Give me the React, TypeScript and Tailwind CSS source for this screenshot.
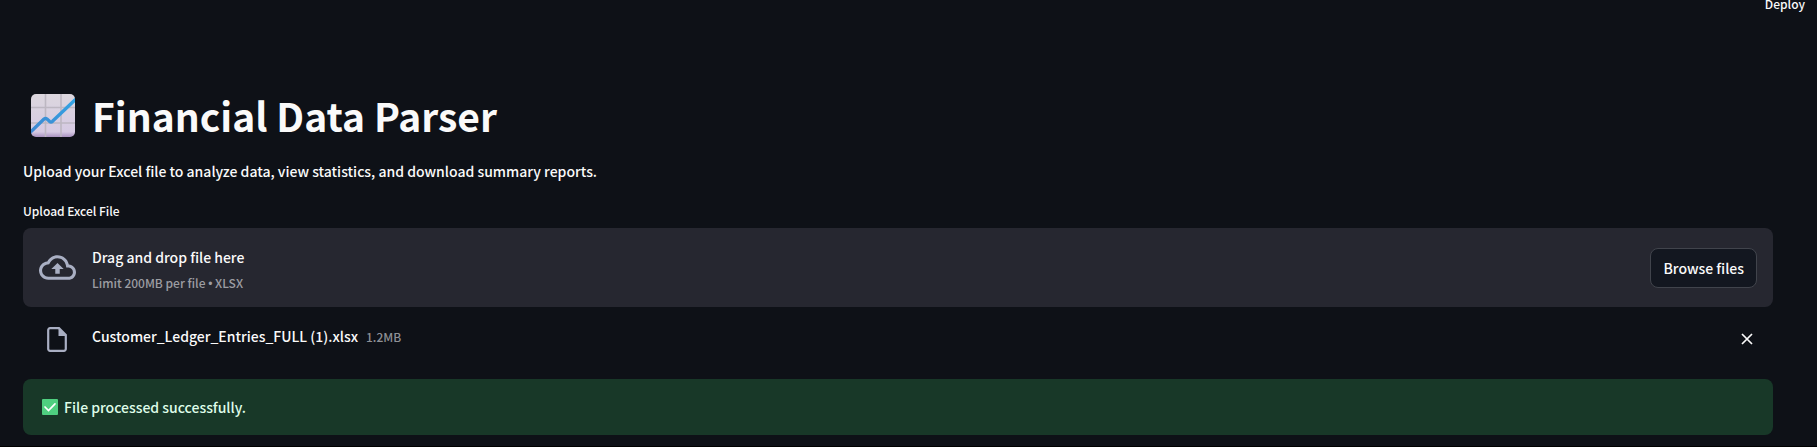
function ChartIcon() {
  return (
    <svg viewBox="0 0 44 43" className="h-[43px] w-11 shrink-0" aria-hidden="true">
      <defs>
        <linearGradient id="paper" x1="0" y1="0" x2="0" y2="1">
          <stop offset="0" stopColor="#dcd7de" />
          <stop offset="0.88" stopColor="#d6cae3" />
          <stop offset="1" stopColor="#a992c0" />
        </linearGradient>
        <linearGradient id="line" x1="0" y1="1" x2="1" y2="0">
          <stop offset="0" stopColor="#3f86d0" />
          <stop offset="1" stopColor="#32a5e4" />
        </linearGradient>
        <clipPath id="sheet">
          <rect width="44" height="43" rx="5" />
        </clipPath>
      </defs>
      <g clipPath="url(#sheet)">
        <rect width="44" height="43" fill="url(#paper)" />
        <path d="M14.500 0v43M30 0v43M0 13.500h44M0 29h44" stroke="#bdb7c2" strokeWidth="1.600" />
        <path d="M-1 38.500 13 25q1.500-1.200 3 0l2.500 2.300q1.500 1.200 3 0L45 5" fill="none" stroke="url(#line)" strokeWidth="3.400" />
      </g>
    </svg>
  );
}

function CheckIcon() {
  return (
    <svg viewBox="0 0 16 16" className="size-4 shrink-0" aria-hidden="true">
      <rect width="16" height="16" rx="1" fill="#4fcf80" />
      <path d="m3 8 3.500 3.500L13 4.800" fill="none" stroke="#fff" strokeWidth="1.700" strokeLinecap="round" />
    </svg>
  );
}

function CloudUploadIcon() {
  return (
    <svg viewBox="0 0 24 24" className="size-[37px] shrink-0" fill="#a9afc3" aria-hidden="true">
      <path d="M19.350 10.040C18.670 6.590 15.640 4 12 4 9.110 4 6.600 5.640 5.350 8.040 2.340 8.360 0 10.910 0 14c0 3.310 2.690 6 6 6h13c2.760 0 5-2.240 5-5 0-2.640-2.050-4.780-4.650-4.960zM19 18H6c-2.210 0-4-1.790-4-4 0-2.050 1.530-3.760 3.560-3.970l1.070-.11.5-.95C8.080 7.140 9.940 6 12 6c2.620 0 4.880 1.860 5.390 4.430l.3 1.500 1.530.11c1.560.1 2.780 1.410 2.780 2.960 0 1.650-1.350 3-3 3zM8 13h2.550v3h2.900v-3H16l-4-4z" />
    </svg>
  );
}

function FileIcon() {
  return (
    <svg viewBox="0 0 20 25" className="h-[25px] w-5 shrink-0" aria-hidden="true">
      <path d="M3 1.200h9L18.800 8v14a1.800 1.800 0 0 1-1.800 1.800H3A1.800 1.800 0 0 1 1.200 22V3A1.800 1.800 0 0 1 3 1.200z" fill="none" stroke="#a9afc3" strokeWidth="2.200" />
      <path d="M11.500 1v8H19z" fill="#a9afc3" />
    </svg>
  );
}

function CloseIcon() {
  return (
    <svg viewBox="0 0 12 12" className="size-3" aria-hidden="true">
      <path d="m1 1 10 10M11 1 1 11" stroke="#fafafa" strokeWidth="1.700" />
    </svg>
  );
}

export default function App() {
  return (
    <div className="min-h-screen border-b border-black bg-[#0e1117] font-['Noto_Sans_CJK_SC',sans-serif] text-sm font-medium text-[#fafafa]">
      <header className="flex h-[14px] items-end justify-end pr-3">
        <button type="button" className="text-xs leading-5">Deploy</button>
      </header>
      <main className="pt-[75px] pr-11 pb-2 pl-[23px]">
        <h1 className="flex h-[53px] items-center gap-[17px] pl-2 text-[39px] leading-[53px] font-bold">
          <ChartIcon />
          Financial Data Parser
        </h1>
        <p className="mt-[17px] leading-6">
          Upload your Excel file to analyze data, view statistics, and download summary reports.
        </p>
        <label htmlFor="browse" className="mt-4 block text-xs leading-6">Upload Excel File</label>
        <section className="mt-[5px] flex h-[79px] items-center rounded-lg bg-[#262730] px-4">
          <CloudUploadIcon />
          <div className="ml-4 flex-1 pt-1">
            <div className="leading-6">Drag and drop file here</div>
            <div className="mt-1 text-xs leading-5 text-[#9c9da2]">
              Limit 200MB per file <span className="font-['Liberation_Sans',sans-serif]">•</span> XLSX
            </div>
          </div>
          <button id="browse" type="button" className="h-10 rounded-lg border border-[#41444c] bg-[#131720] px-3 leading-5">
            Browse files
          </button>
        </section>
        <div className="flex h-[72px] pt-5 pr-5 pl-6">
          <FileIcon />
          <div className="-mt-[3px] ml-[25px] flex flex-1 items-baseline gap-2 leading-6">
            <span>Customer_Ledger_Entries_FULL (1).xlsx</span>
            <small className="text-xs text-[#8e9095]">1.2MB</small>
          </div>
          <button type="button" aria-label="Remove file" className="h-6">
            <CloseIcon />
          </button>
        </div>
        <div role="status" className="flex h-14 items-center gap-1.5 rounded-lg bg-[#183828] px-[19px] leading-6 text-[#dffde9]">
          <CheckIcon />
          File processed successfully.
        </div>
      </main>
    </div>
  );
}
